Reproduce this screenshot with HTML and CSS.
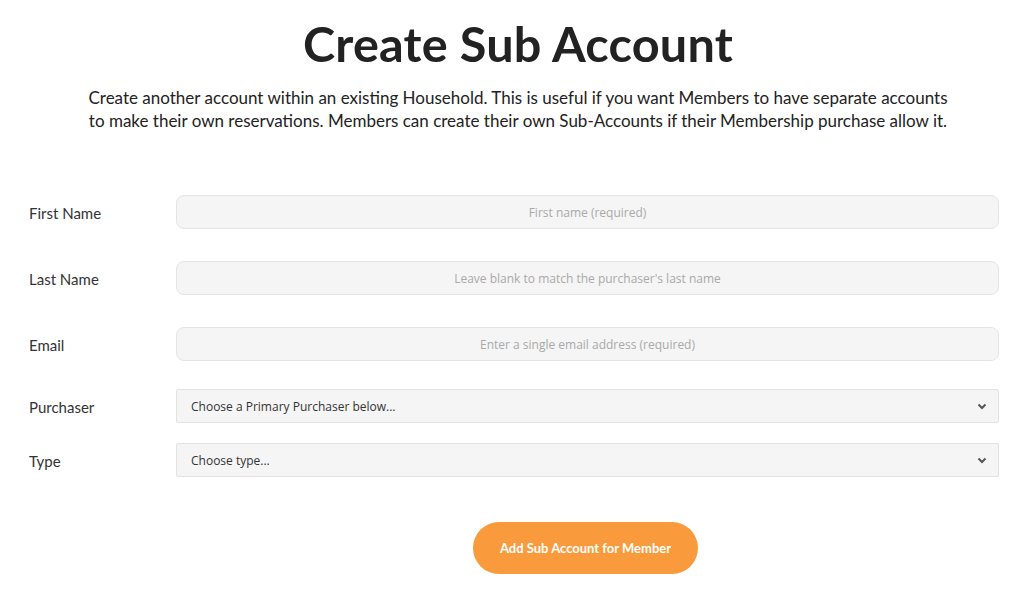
FILE: index.html
```html
<!DOCTYPE html>
<html lang="en">
<head>
<meta charset="utf-8">
<title>Create Sub Account</title>
<link rel="stylesheet" href="styles.css">
</head>
<body>
<main class="page">
  <header class="head">
    <h1 class="title">Create Sub Account</h1>
    <p class="intro">Create another account within an existing Household. This is useful if you want Members to have separate accounts<br>to make their own reservations. Members can create their own Sub-Accounts if their Membership purchase allow it.</p>
  </header>
  <form class="form">
    <div class="row row-input">
      <label class="label">First Name</label>
      <input class="field" type="text" placeholder="First name (required)">
    </div>
    <div class="row row-input">
      <label class="label">Last Name</label>
      <input class="field" type="text" placeholder="Leave blank to match the purchaser's last name">
    </div>
    <div class="row row-input">
      <label class="label">Email</label>
      <input class="field" type="text" placeholder="Enter a single email address (required)">
    </div>
    <div class="row row-select">
      <label class="label">Purchaser</label>
      <div class="select">
        <span>Choose a Primary Purchaser below...</span>
        <svg class="chev" width="10" height="7" viewBox="0 0 10 7"><path d="M1.5 1.5 L5 5 L8.5 1.5" fill="none" stroke="#555" stroke-width="2"/></svg>
      </div>
    </div>
    <div class="row row-select">
      <label class="label">Type</label>
      <div class="select">
        <span>Choose type...</span>
        <svg class="chev" width="10" height="7" viewBox="0 0 10 7"><path d="M1.5 1.5 L5 5 L8.5 1.5" fill="none" stroke="#555" stroke-width="2"/></svg>
      </div>
    </div>
    <div class="actions">
      <button type="button" class="btn">Add Sub Account for Member</button>
    </div>
  </form>
</main>
</body>
</html>
```
FILE: styles.css
```css
* { box-sizing: border-box; }
html, body { margin: 0; padding: 0; background: #fff; }
body { font-family: Lato, "Open Sans", sans-serif; color: #222; }
.page { width: 1024px; height: 591px; overflow: hidden; }
.head { padding-left: 12px; }
.title {
  margin: 14px 0 0;
  text-align: center;
  font-size: 48.6px;
  font-weight: 700;
  line-height: 58px;
  color: #222;
  letter-spacing: 0.2px;
}
.intro {
  margin: 14px 0 0;
  text-align: center;
  font-size: 17px;
  line-height: 23px;
  color: #222;
}
.form {
  margin-top: 63px;
  padding: 0 25px 0 29px;
}
.row {
  display: flex;
  align-items: center;
}
.row-input { height: 34px; margin-bottom: 32px; }
.row-select { height: 34px; margin-bottom: 20px; }
.row-input + .row-select { margin-top: -4px; }
.label {
  width: 147px;
  flex: none;
  font-size: 15px;
  color: #333;
  padding-top: 2px;
}
.field {
  flex: 1;
  height: 34px;
  border: 1px solid #e4e4e4;
  border-radius: 8px;
  background: #f5f5f5;
  text-align: center;
  font-family: "Open Sans", Lato, sans-serif;
  font-size: 12px;
  color: #333;
  outline: none;
}
.field::placeholder { color: #a9a9a9; }
.select {
  flex: 1;
  height: 34px;
  border: 1px solid #e2e2e2;
  border-radius: 2px;
  background: #f5f5f5;
  display: flex;
  align-items: center;
  justify-content: space-between;
  padding: 0 11px 0 14px;
  font-family: "Open Sans", Lato, sans-serif;
  font-size: 12px;
  color: #333;
}
.chev { display: block; }
.actions {
  display: flex;
  justify-content: center;
  margin-top: 45px;
  padding-left: 143px;
}
.btn {
  width: 225px;
  height: 52px;
  border: none;
  border-radius: 26px;
  background: #f99a3c;
  color: #fff;
  font-family: Lato, "Open Sans", sans-serif;
  font-weight: 700;
  font-size: 13px;
}
```
